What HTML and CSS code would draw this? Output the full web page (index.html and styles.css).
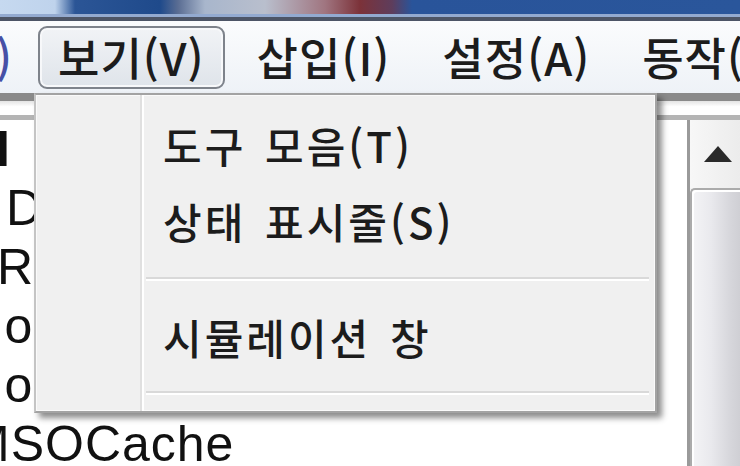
FILE: index.html
```html
<!DOCTYPE html>
<html lang="ko">
<head>
<meta charset="utf-8">
<link rel="stylesheet" href="styles.css">
</head>
<body>
<div class="screen">
  <div class="titlebar"></div>
  <div class="menubar">
    <span class="mi edge">)</span>
    <span class="mi active">보기(V)</span>
    <span class="mi">삽입(I)</span>
    <span class="mi">설정(A)</span>
    <span class="mi">동작(W)</span>
  </div>
  <div class="listhead"></div>
  <div class="content">
    <div class="list">
      <div class="row r1">I</div>
      <div class="row r2">Documents and Settings</div>
      <div class="row r3">Recovery</div>
      <div class="row r4">Go online</div>
      <div class="row r4">Go offline</div>
      <div class="row r6">MSOCache</div>
    </div>
    <div class="scrollbar">
      <div class="sb-up">
        <svg class="arrow" width="30" height="18" viewBox="0 0 30 18"><path d="M1 17 L15 1 L29 17 Z" fill="#2a2a2a"/></svg>
      </div>
      <div class="sb-thumb"></div>
    </div>
  </div>
  <div class="dropdown">
    <div class="gutter"></div>
    <div class="items">
      <div class="item">도구 모음(T)</div>
      <div class="item">상태 표시줄(S)</div>
      <div class="sep"></div>
      <div class="item">시뮬레이션 창</div>
      <div class="sep"></div>
    </div>
  </div>
</div>
</body>
</html>
```
FILE: styles.css
```css
html, body {
  margin: 0;
  padding: 0;
  background: #ffffff;
}
.screen {
  position: relative;
  width: 740px;
  height: 466px;
  overflow: hidden;
  background: #ffffff;
  font-family: "Noto Sans CJK KR", "Noto Sans", sans-serif;
}
.titlebar {
  height: 14px;
  background: linear-gradient(to right, #c6d9f0 0, #bfd3ec 55px, #2b5596 75px, #1f4a8b 160px, #5a6d93 178px, #a8b6cc 205px, #b9bfcd 265px, #a07580 325px, #7c3239 360px, #5e3d5c 392px, #29549a 412px, #2a569b 740px);
  border-bottom: 3px solid #93aad0;
  box-shadow: 0 4px 0 #4d5566;
  margin-bottom: 4px;
}
.menubar {
  height: 72px;
  display: flex;
  align-items: center;
  background: linear-gradient(#fbfcfd, #eef2f7);
  white-space: nowrap;
  font-size: 45px;
  letter-spacing: 1px;
  color: #1c1c1c;
}
.mi {
  box-sizing: border-box;
  height: 63px;
  line-height: 57px;
  padding: 0 18px;
  border: 2px solid transparent;
  border-radius: 9px;
  font-weight: 500;
  margin-right: 12px;
}
.mi.edge {
  padding: 0;
  margin-left: -6px;
  margin-right: 23px;
  color: #4650a6;
}
.mi.active {
  border-color: #7e838b;
  background: linear-gradient(#f1f3f6, #dfe4ea);
  box-shadow: inset 0 0 0 2px #f7f8fa;
}
.listhead {
  height: 27px;
  box-sizing: border-box;
  border-top: 8px solid #8a8a8a;
  border-bottom: 5px solid #b4b4b4;
  background: linear-gradient(#e4e4e4, #ffffff 40%);
}
.content {
  display: flex;
  height: 346px;
}
.list {
  flex: 1;
  overflow: hidden;
  font-family: "Liberation Sans", Arial, sans-serif;
  font-size: 50px;
  letter-spacing: 1px;
  color: #111111;
}
.row {
  height: 59px;
  line-height: 59px;
  white-space: nowrap;
}
.r1 { margin-left: -4px; font-weight: 700; }
.r2 { margin-left: 6px; }
.r3 { margin-left: -3px; }
.r4 { margin-left: -79px; }
.r6 { margin-left: -32px; }
.scrollbar {
  width: 50px;
  border-left: 3px solid #9a9a9a;
  background: #f2f2f2;
  display: flex;
  flex-direction: column;
}
.sb-up {
  height: 68px;
  display: flex;
  align-items: center;
  justify-content: center;
  padding-left: 6px;
  background: linear-gradient(to right, #f7f7f7, #ececec);
}
.sb-thumb {
  flex: 1;
  border: 2px solid #ababab;
  border-right: none;
  border-bottom: none;
  border-radius: 5px 0 0 0;
  background: linear-gradient(to right, #f4f4f6 0, #e9e9ed 40%, #d6d6db 80%, #cfcfd4 100%);
  box-shadow: inset 2px 2px 0 #ffffff;
}
.dropdown {
  position: absolute;
  left: 34px;
  top: 93px;
  width: 623px;
  height: 320px;
  box-sizing: border-box;
  border: 2px solid #a3a3a3;
  border-left-color: #c4c4c4;
  background: #f0f0f0;
  box-shadow: inset 0 0 0 1px #fafafa, 5px 5px 6px rgba(0, 0, 0, 0.45);
  display: flex;
}
.gutter {
  width: 104px;
  border-right: 2px solid #e0e0e0;
  box-shadow: 2px 0 0 #ffffff;
}
.items {
  flex: 1;
  padding-top: 12px;
  font-size: 42px;
  font-weight: 500;
  letter-spacing: 3px;
  color: #1c1c1c;
  word-spacing: 4px;
}
.item {
  height: 76px;
  line-height: 76px;
  padding-left: 21px;
  white-space: nowrap;
}
.sep {
  height: 36px;
  margin: 0 6px 0 4px;
  display: flex;
  flex-direction: column;
  justify-content: center;
}
.sep:nth-child(3) {
  height: 40px;
}
.sep::before {
  content: "";
  display: block;
  height: 2px;
  background: #d9d9d9;
  border-bottom: 2px solid #ffffff;
}
```
